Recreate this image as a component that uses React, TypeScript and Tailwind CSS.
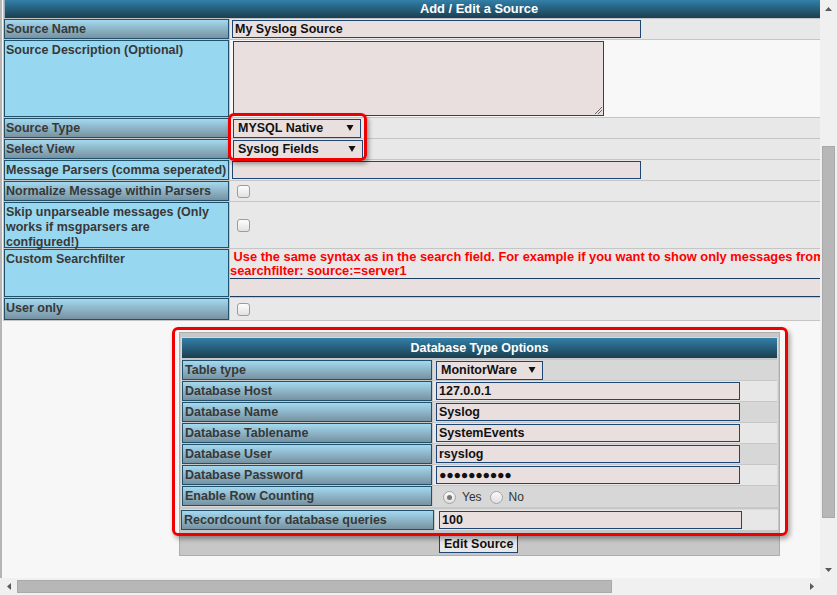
import React from "react";

const LBL_GRAD =
  "shrink-0 border border-[#21506a] bg-linear-to-b from-[#a3d9f0] to-[#7792a1] px-[1px] pt-[2px] text-[12.5px] font-bold leading-[15px] text-[#383838] whitespace-nowrap";
const LBL_SOLID =
  "shrink-0 border border-[#21506a] bg-[#98d7f0] px-[1px] pt-[2px] text-[12.5px] font-bold leading-[15px] text-[#383838] whitespace-nowrap";
const INPUT =
  "h-[18px] border border-[#1e4674] bg-[#e9dfdf] px-[2px] text-[12.5px] font-bold leading-[16px] text-[#111] whitespace-nowrap overflow-hidden";

function Tri({ dir }: { dir: "up" | "down" | "left" | "right" }) {
  const pts =
    dir === "up"
      ? "0,4 3.5,0 7,4"
      : dir === "down"
      ? "0,0 7,0 3.5,4"
      : dir === "left"
      ? "4,0 4,7 0,3.5"
      : "0,0 0,7 4,3.5";
  const w = dir === "up" || dir === "down" ? 7 : 4;
  const h = dir === "up" || dir === "down" ? 4 : 7;
  return (
    <svg width={w} height={h} viewBox={`0 0 ${w} ${h}`}>
      <polygon points={pts} fill="#5a5a5a" />
    </svg>
  );
}

function Caret() {
  return (
    <svg width="8" height="8" viewBox="0 0 8 8">
      <polygon points="0.5,1 7.5,1 4,7" fill="#111" />
    </svg>
  );
}

function Select({ text, w }: { text: string; w: string }) {
  return (
    <div
      className={`${w} h-[19px] border border-[#1e4674] bg-[#e9dfdf] pl-[4px] pr-[6px] flex items-center justify-between text-[12.5px] font-bold text-[#111] whitespace-nowrap`}
    >
      <span>{text}</span>
      <Caret />
    </div>
  );
}

function Check() {
  return (
    <div className="w-[13px] h-[13px] rounded-[3px] border border-[#9c9c9c] bg-linear-to-b from-[#fdfdfd] to-[#e2e2e2]" />
  );
}

function Radio({ on }: { on?: boolean }) {
  return (
    <div className="w-[13px] h-[13px] rounded-full border border-[#a4a4a4] bg-linear-to-b from-[#fafafa] to-[#e0e0e0] flex items-center justify-center">
      {on && <div className="w-[5px] h-[5px] rounded-full bg-[#767676]" />}
    </div>
  );
}

function DbRow({
  label,
  dark,
  children,
}: {
  label: string;
  dark: boolean;
  children: React.ReactNode;
}) {
  return (
    <div className="flex gap-[1px] h-[20px]">
      <div className={`${LBL_GRAD} w-[250px] pl-[2px]`}>{label}</div>
      <div
        className={`flex-1 flex items-center ${
          dark ? "bg-[#d7d7d7]" : "bg-[#e7e7e7]"
        }`}
      >
        {children}
      </div>
    </div>
  );
}

export default function App() {
  return (
    <div className="relative w-[837px] h-[595px] overflow-hidden bg-[#f7f7f7] flex flex-col font-['Liberation_Sans',Arial,sans-serif]">
      <div className="flex flex-1 min-h-0">
        {/* content */}
        <div className="flex-1 min-w-0 overflow-hidden border-l-2 border-[#b5b5b5]">
          {/* main table */}
          <div className="ml-[1px] w-[952px] bg-[#c5c5c5] px-[1px] pb-[1px] flex flex-col gap-[1px]">
            <div className="h-[18px] bg-linear-to-b from-[#3280a9] to-[#1b3f50] border-x border-[#9ab] text-center text-[12.9px] font-bold leading-[18px] text-white">
              Add / Edit a Source
            </div>

            <div className="flex gap-[1px] h-[20px]">
              <div className={`${LBL_GRAD} w-[225px]`}>Source Name</div>
              <div className="flex-1 bg-[#e8e8e8] flex items-center pl-[2px]">
                <div className={`${INPUT} w-[409px]`}>My Syslog Source</div>
              </div>
            </div>

            <div className="flex gap-[1px] h-[77px]">
              <div className={`${LBL_SOLID} w-[225px]`}>
                Source Description (Optional)
              </div>
              <div className="flex-1 bg-[#f8f8f8] pl-[3px] pt-[1px]">
                <div className="relative w-[371px] h-[75px] border border-[#1e4674] bg-[#e9dfdf]">
                  <svg
                    className="absolute right-[1px] bottom-[1px]"
                    width="8"
                    height="8"
                    viewBox="0 0 8 8"
                  >
                    <line x1="1" y1="8" x2="8" y2="1" stroke="#666" strokeWidth="1" />
                    <line x1="4" y1="8" x2="8" y2="4" stroke="#666" strokeWidth="1" />
                  </svg>
                </div>
              </div>
            </div>

            <div className="flex gap-[1px] h-[20px]">
              <div className={`${LBL_GRAD} w-[225px]`}>Source Type</div>
              <div className="flex-1 bg-[#e8e8e8] flex items-center pl-[3px]">
                <Select text="MYSQL Native" w="w-[128px]" />
              </div>
            </div>

            <div className="flex gap-[1px] h-[20px]">
              <div className={`${LBL_GRAD} w-[225px]`}>Select View</div>
              <div className="flex-1 bg-[#e8e8e8] flex items-center pl-[3px]">
                <Select text="Syslog Fields" w="w-[130px]" />
              </div>
            </div>

            <div className="flex gap-[1px] h-[20px]">
              <div className={`${LBL_SOLID} w-[225px]`}>
                Message Parsers (comma seperated)
              </div>
              <div className="flex-1 bg-[#e8e8e8] flex items-center pl-[2px]">
                <div className={`${INPUT} w-[409px]`}></div>
              </div>
            </div>

            <div className="flex gap-[1px] h-[20px]">
              <div className={`${LBL_GRAD} w-[225px]`}>
                Normalize Message within Parsers
              </div>
              <div className="flex-1 bg-[#e8e8e8] flex items-center pl-[7px]">
                <Check />
              </div>
            </div>

            <div className="flex gap-[1px] h-[46px]">
              <div className={`${LBL_SOLID} w-[225px]`}>
                Skip unparseable messages (Only
                <br />
                works if msgparsers are
                <br />
                configured!)
              </div>
              <div className="flex-1 bg-[#e8e8e8] flex items-center pl-[7px]">
                <Check />
              </div>
            </div>

            <div className="flex gap-[1px] h-[48px]">
              <div className={`${LBL_SOLID} w-[225px]`}>Custom Searchfilter</div>
              <div className="flex-1 bg-[#e8e8e8] flex flex-col pt-[1px]">
                <div className="text-[12.85px] font-bold leading-[14px] text-[#ff0000] whitespace-nowrap">
                  &nbsp;Use the same syntax as in the search field. For example if you want to show only messages from
                  <br />
                  searchfilter: source:=server1
                </div>
                <div className="h-[19px] border-y border-[#1e3d63] bg-[#e9dfdf]" />
              </div>
            </div>

            <div className="flex gap-[1px] h-[22px]">
              <div className={`${LBL_GRAD} w-[225px]`}>User only</div>
              <div className="flex-1 bg-[#e8e8e8] flex items-center pl-[7px]">
                <Check />
              </div>
            </div>
          </div>

          {/* database options */}
          <div className="mt-[11px] ml-[177px] w-[601px] border border-[#adadad] bg-[#c7c7c7] px-[1px] pt-[4px] pb-[2px]">
            <div className="border border-[#d9d9d9] flex flex-col gap-[1px]">
              <div className="h-[20px] mb-[1px] bg-linear-to-b from-[#3280a9] to-[#1b3f50] text-center text-[12.5px] font-bold leading-[20px] text-white">
                Database Type Options
              </div>
              <DbRow label="Table type" dark>
                <div className="ml-[3px]">
                  <Select text="MonitorWare" w="w-[107px]" />
                </div>
              </DbRow>
              <DbRow label="Database Host" dark={false}>
                <div className={`${INPUT} ml-[3px] w-[304px]`}>127.0.0.1</div>
              </DbRow>
              <DbRow label="Database Name" dark>
                <div className={`${INPUT} ml-[3px] w-[304px]`}>Syslog</div>
              </DbRow>
              <DbRow label="Database Tablename" dark={false}>
                <div className={`${INPUT} ml-[3px] w-[304px]`}>SystemEvents</div>
              </DbRow>
              <DbRow label="Database User" dark>
                <div className={`${INPUT} ml-[3px] w-[304px]`}>rsyslog</div>
              </DbRow>
              <DbRow label="Database Password" dark={false}>
                <div className={`${INPUT} ml-[3px] w-[304px] text-[11.5px] tracking-[-0.3px]`}>
                  ●●●●●●●●●●
                </div>
              </DbRow>
              <DbRow label="Enable Row Counting" dark>
                <div className="ml-[10px] flex items-center text-[12px] text-[#333] pt-[2px]">
                  <Radio on />
                  <span className="ml-[6px]">Yes</span>
                  <span className="ml-[8px]">
                    <Radio />
                  </span>
                  <span className="ml-[6px]">No</span>
                </div>
              </DbRow>
            </div>
            <div className="mt-[2px] flex gap-[1px] h-[21px] border-t border-[#d9d9d9]">
              <div className={`${LBL_GRAD} w-[253px] pl-[2px]`}>
                Recordcount for database queries
              </div>
              <div className="flex-1 bg-[#e7e7e7] flex items-center">
                <div className={`${INPUT} ml-[4px] w-[303px]`}>100</div>
              </div>
            </div>
            <div className="mt-[5px] pl-[258px] flex">
              <div className="h-[18px] border border-[#1e4674] bg-[#e8e8e8] px-[4px] text-[12.5px] font-bold leading-[16px] text-[#111]">
                Edit Source
              </div>
            </div>
          </div>
        </div>

        {/* vertical scrollbar */}
        <div className="w-[17px] shrink-0 bg-[#f0f0f0] flex flex-col">
          <div className="h-[17px] flex items-center justify-center">
            <Tri dir="up" />
          </div>
          <div className="mt-[129px] ml-[2px] w-[13px] h-[372px] bg-[#b7b7b7] border border-[#a9a9a9]" />
          <div className="flex-1" />
          <div className="h-[17px] flex items-center justify-center">
            <Tri dir="down" />
          </div>
        </div>
      </div>

      {/* horizontal scrollbar */}
      <div className="h-[17px] shrink-0 flex bg-[#f0f0f0]">
        <div className="w-[17px] flex items-center justify-center">
          <Tri dir="left" />
        </div>
        <div className="mt-[2px] w-[595px] h-[13px] bg-[#b7b7b7] border border-[#a9a9a9]" />
        <div className="flex-1" />
        <div className="w-[17px] flex items-center justify-center">
          <Tri dir="right" />
        </div>
        <div className="w-[17px] bg-[#f0f0f0]" />
      </div>

      {/* red annotation boxes */}
      <div className="absolute left-[228px] top-[113px] w-[139px] h-[48px] rounded-[6px] border-[3px] border-[#ee0000] shadow-[2px_3px_4px_rgba(0,0,0,0.35)]" />
      <div className="absolute left-[172px] top-[327px] w-[616px] h-[209px] rounded-[6px] border-[3px] border-[#ee0000] shadow-[2px_3px_5px_rgba(0,0,0,0.35)]" />
    </div>
  );
}
